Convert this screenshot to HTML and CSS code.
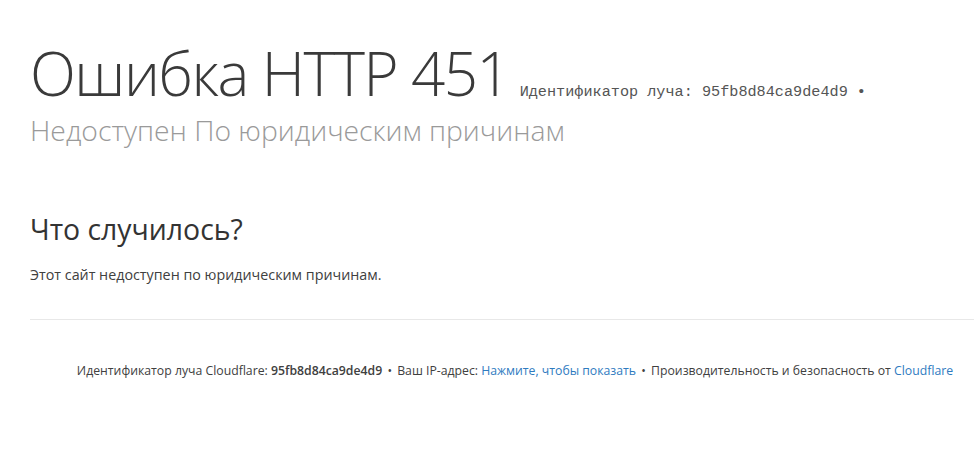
FILE: index.html
```html
<!DOCTYPE html>
<html lang="ru">
<head>
  <meta charset="UTF-8" />
  <title>Ошибка HTTP 451</title>
  <meta name="viewport" content="width=device-width, initial-scale=1" />
  <link rel="stylesheet" href="styles.css">
</head>
<body>
  <div class="wrapper">
    <header class="error-header">
      <h1>
        <span class="error-code">Ошибка HTTP 451</span>
        <small class="ray-id">Идентификатор луча: 95fb8d84ca9de4d9 &bull;</small>
      </h1>
      <h2 class="subtitle">Недоступен По юридическим причинам</h2>
    </header>

    <section class="what-happened">
      <h2>Что случилось?</h2>
      <p>Этот сайт недоступен по юридическим причинам.</p>
    </section>

    <footer class="error-footer">
      <p>
        <span>Идентификатор луча Cloudflare: <strong>95fb8d84ca9de4d9</strong></span>
        <span class="sep">&bull;</span>
        <span>Ваш IP-адрес: <a href="#">Нажмите, чтобы показать</a></span>
        <span class="sep">&bull;</span>
        <span>Производительность и безопасность от <a href="#">Cloudflare</a></span>
      </p>
    </footer>
  </div>
</body>
</html>
```

FILE: styles.css
```css
body {
  margin: 0;
  font-family: "Open Sans", "Noto Sans", sans-serif;
  color: #404040;
  background-color: #fff;
  overflow: hidden;
}

.wrapper {
  width: 970px;
  margin-left: 30px;
}

.error-header {
  padding-top: 43px;
}

h1 {
  margin: 0;
  font-weight: 300;
  line-height: 1;
}

.error-code {
  font-size: 60px;
  color: #3a3a3a;
  letter-spacing: -1.5px;
}

.ray-id {
  font-family: "Liberation Mono", "Courier New", monospace;
  font-size: 15.2px;
  font-weight: 400;
  color: #555;
  margin-left: 2px;
}

.subtitle {
  margin: 8px 0 0;
  font-size: 28.3px;
  font-weight: 300;
  color: #9a9a9a;
}

.what-happened {
  padding-top: 61px;
}

.what-happened h2 {
  margin: 0;
  font-size: 28.4px;
  font-weight: 400;
  color: #333;
}

.what-happened p {
  margin: 17px 0 0;
  font-size: 14.3px;
  color: #404040;
}

.error-footer {
  margin-top: 35px;
  border-top: 1px solid #e8e8e8;
  padding-top: 42px;
  text-align: center;
  font-size: 12.25px;
  color: #404040;
}

.error-footer p {
  margin: 0;
}

.error-footer strong {
  font-weight: 600;
}

.error-footer a {
  color: #2f7bbf;
  text-decoration: none;
}

.sep {
  margin: 0 2px;
}
```
